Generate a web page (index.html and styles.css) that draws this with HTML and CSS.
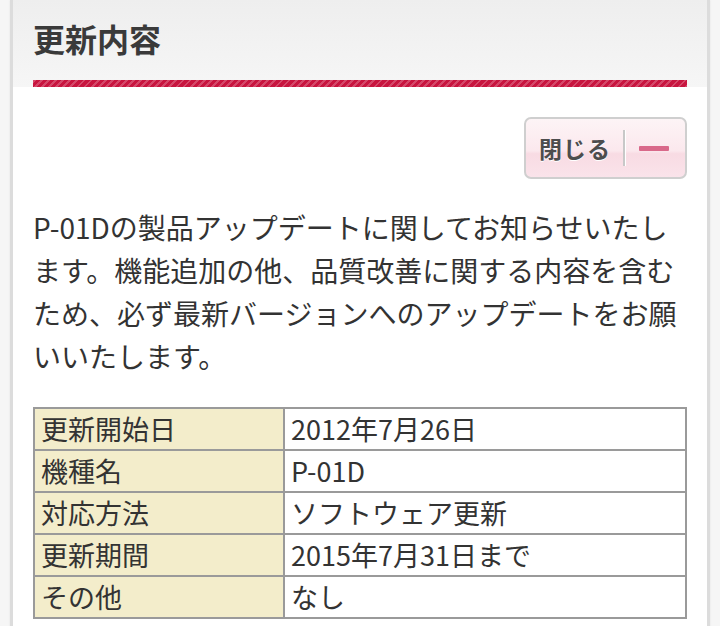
FILE: index.html
```html
<!DOCTYPE html>
<html lang="ja">
<head>
<meta charset="utf-8">
<title>更新内容</title>
<link rel="stylesheet" href="styles.css">
</head>
<body>
<div class="card">
  <div class="card-head">
    <h2 class="title">更新内容</h2>
    <div class="title-bar"></div>
  </div>
  <div class="card-body">
    <div class="btn-row">
      <button class="close-btn" type="button"><span class="close-label">閉じる</span><span class="close-sep"></span><span class="close-icon"></span></button>
    </div>
    <p class="lead">P-01Dの製品アップデートに関してお知らせいたし<br>ます。機能追加の他、品質改善に関する内容を含む<br>ため、必ず最新バージョンへのアップデートをお願<br>いいたします。</p>
    <table class="info">
      <tr><th>更新開始日</th><td>2012年7月26日</td></tr>
      <tr><th>機種名</th><td>P-01D</td></tr>
      <tr><th>対応方法</th><td>ソフトウェア更新</td></tr>
      <tr><th>更新期間</th><td>2015年7月31日まで</td></tr>
      <tr><th>その他</th><td>なし</td></tr>
    </table>
  </div>
</div>
</body>
</html>
```

FILE: styles.css
```css
html, body {
  margin: 0;
  padding: 0;
}
body {
  background: #f6f6f6;
  font-family: "Noto Sans CJK JP", "Noto Sans", sans-serif;
  color: #333;
  height: 626px;
  overflow: hidden;
}
.card {
  margin: 0 10px;
  border-left: 3px solid #dcdcdc;
  border-right: 3px solid #dcdcdc;
  background: #fff;
  min-height: 626px;
  box-shadow: 0 0 2px rgba(0,0,0,0.08);
}
.card-head {
  padding: 17px 20px 0 20px;
  background: linear-gradient(#eeeeee, #f6f6f6);
}
.title {
  margin: 0;
  font-size: 32px;
  line-height: 42px;
  font-weight: bold;
  color: #3a3a3a;
}
.title-bar {
  margin-top: 21px;
  height: 7px;
  background-color: #c8153f;
  background-image: repeating-linear-gradient(-45deg, rgba(255,255,255,0.22) 0 2px, transparent 2px 5px);
}
.card-body {
  padding: 30px 20px 20px 20px;
}
.btn-row {
  display: flex;
  justify-content: flex-end;
}
.close-btn {
  display: flex;
  align-items: center;
  width: 163px;
  height: 62px;
  padding: 0 0 0 13px;
  border: 2px solid #cfcfcf;
  border-radius: 7px;
  background: linear-gradient(#fdf4f6 0%, #fbe8ed 55%, #f8dbe3 60%, #fae3ea 100%);
  font-family: "Noto Sans CJK JP", sans-serif;
  cursor: pointer;
}
.close-label {
  font-size: 23px;
  font-weight: bold;
  color: #4d4d4d;
  letter-spacing: 1px;
  text-shadow: 0 1px 0 #fff;
}
.close-sep {
  width: 2px;
  height: 36px;
  margin-left: 12px;
  background: #c8c8c8;
  box-shadow: 1px 0 0 #fff;
}
.close-icon {
  width: 30px;
  height: 5px;
  margin-left: 14px;
  background: #d9698a;
  border-radius: 1px;
}
.lead {
  margin: 27px 0 0 0;
  font-size: 28px;
  line-height: 43px;
  color: #333;
  white-space: nowrap;
}
.info {
  margin-top: 29px;
  width: 100%;
  border-collapse: collapse;
  font-size: 27px;
}
.info th, .info td {
  border: 2px solid #9a9a9a;
  height: 40px;
  padding: 0 6px;
  text-align: left;
  font-weight: normal;
  line-height: 38px;
  color: #333;
}
.info th {
  width: 236px;
  background: #f3edcb;
}
.info td {
  background: #fff;
}
```
